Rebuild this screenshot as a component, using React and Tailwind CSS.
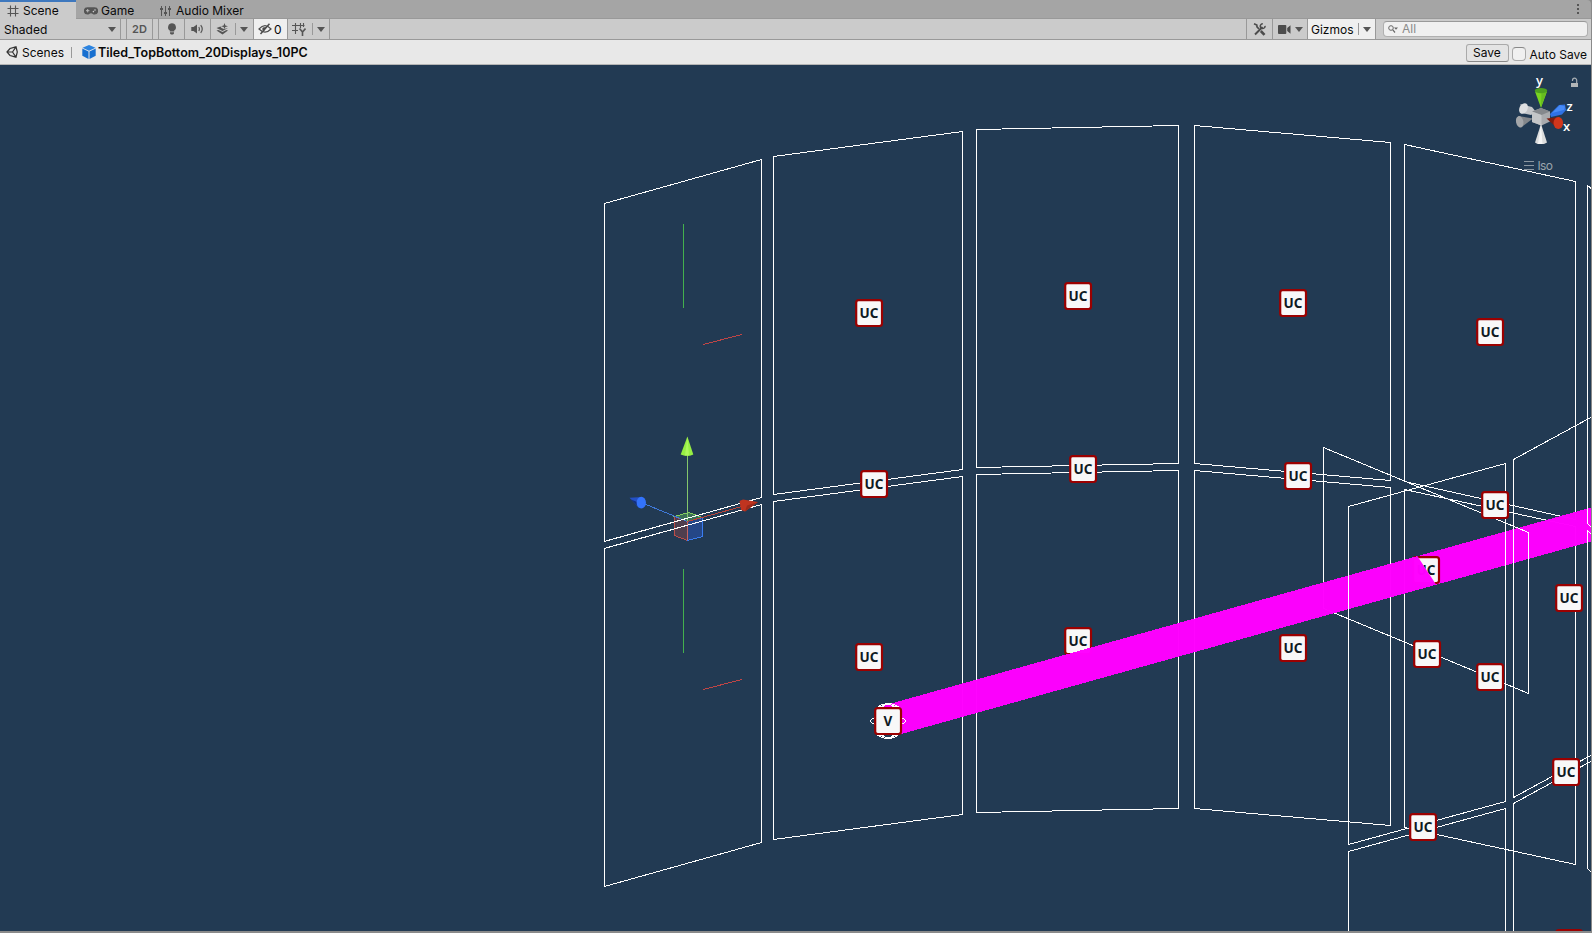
import React from "react";

const LINE = "#ffffff";

const backPanels = [
  "604.5,203.5 761.5,159.5 761.5,497.5 604.5,541.5",
  "604.5,548.5 761.5,504.5 761.5,842.5 604.5,886.5",
  "773.5,156.5 962.5,131.5 962.5,469.5 773.5,494.5",
  "773.5,501.5 962.5,476.5 962.5,814.5 773.5,839.5",
  "976.5,129.5 1178.5,125.5 1178.5,463.5 976.5,467.5",
  "976.5,474.5 1178.5,470.5 1178.5,808.5 976.5,812.5",
  "1194.5,125.5 1390.5,142.5 1390.5,480.5 1194.5,463.5",
  "1194.5,470.5 1390.5,487.5 1390.5,825.5 1194.5,808.5",
  "1404.5,144.5 1575.5,181.5 1575.5,519.5 1404.5,481.5",
  "1404.5,489.5 1575.5,526.5 1575.5,864.5 1404.5,827.5",
];

const frontPanels = [
  "1587.5,185.5 1640.5,227.5 1640.5,571.5 1587.5,523.5",
  "1587.5,530.5 1640.5,578.5 1640.5,920.5 1587.5,868.5",
  "1348.5,506.5 1505.5,463.5 1505.5,801.5 1348.5,844.5",
  "1348.5,851.5 1505.5,808.5 1505.5,1100.5 1348.5,1100.5",
  "1513.5,459.5 1660.5,379.5 1660.5,717.5 1513.5,797.5",
  "1513.5,803.5 1660.5,723.5 1660.5,1100.5 1513.5,1100.5",
];

const backMarkers = [
  [869, 313], [1078, 296], [1293, 303], [1490, 332],
  [874, 484], [1083, 469], [1298, 476],
  [869, 657], [1078, 641], [1293, 648], [1427, 654],
  [1569, 598], [1426, 570],
];

const frontMarkers = [[1495, 505], [1490, 677], [1566, 772], [1423, 827]];

function Marker({ x, y, label = "UC" }) {
  return (
    <g>
      <rect x={x - 12.8} y={y - 12.8} width="25.8" height="25.8" rx="2.500" fill="#f8f8f8" stroke="#9b0000" strokeWidth="2.200" />
      {label && (
        <text x={x} y={y + 5} textAnchor="middle" fill="#0f1a22" className="font-['Noto_Sans',sans-serif] text-[13.5px] font-bold">
          {label}
        </text>
      )}
    </g>
  );
}

function Beam() {
  return <polygon points="884,705.5 900,701 1591,507.5 1591,541.5 894,736" fill="#ff00ff" fillOpacity="0.985" shapeRendering="crispEdges" />;
}

function MoveGizmo() {
  return (
    <g>
      <g shapeRendering="crispEdges" fill="none">
        <path d="M674.5 516.5 688.5 512.5 702.5 517.5 687.5 521.5Z" fill="#63c05a" fillOpacity=".4" stroke="#82cc5c" />
        <path d="M674.5 516.5 687.5 521.5V540.5L674.5 535.5Z" fill="#c74a45" fillOpacity=".28" stroke="#bd4d48" />
        <path d="M687.5 521.5 702.5 517.5V536.5L687.5 540.5Z" fill="#2a5cd8" fillOpacity=".4" stroke="#3a7cf0" />
        <path d="M687.5 521V540" stroke="#c86460" />
        <path d="M687.5 455V521" stroke="#84c66c" />
        <path d="M643.5 503.5 687.5 521.5" stroke="#3f78d8" />
        <path d="M687.5 521.5 745.5 505.5" stroke="#bb4438" />
        <path d="M604 541.5 761.5 497.5M604 548.5 761.5 504.5" stroke="#fff" />
      </g>
      <path d="M687.4 436.500 693.300 454.5 690 455.8H684.500L680.700 454.500Z" fill="#96ee43" />
      <path d="M687.4 437 689 455.500H685Z" fill="#adf75b" />
      <path d="M629.500 497.800 642 497 639 508Z" fill="#2450c4" />
      <path d="M631 499.500 637 502 638 506.500Z" fill="#142f78" />
      <ellipse cx="641.3" cy="502.700" rx="4.700" ry="5.900" fill="#3373fb" />
      <path d="M758 502 743 499.500 739.500 501 741 510 745 511.500Z" fill="#c03420" />
      <path d="M758 502 747 505.500 745 511.500Z" fill="#9c2a1a" />
    </g>
  );
}

function OrientationGizmo() {
  return (
    <g>
      <path d="M1520.500 104 1532 107 1536 112 1531 115 1521 113Z" fill="#c3c5c8" />
      <ellipse cx="1523.500" cy="108.500" rx="4" ry="5.600" transform="rotate(28 1523.500 108.500)" fill="#dfe0e2" />
      <path d="M1518 116 1533 118.500 1521 127.500Z" fill="#84878b" />
      <ellipse cx="1519.700" cy="121.800" rx="3.700" ry="5.800" transform="rotate(-12 1519.700 121.800)" fill="#a4a6a9" />
      <path d="M1550 114 1559 105 1565 104.500 1566 110 1562 114.500 1551 117Z" fill="#2f72e6" />
      <path d="M1552 113 1560 105 1565 106.500 1564 110Z" fill="#478bf8" />
      <path d="M1532 111.500 1541 108 1550 111.500V121.500L1541.500 125.500 1532 122Z" fill="#a9abae" />
      <path d="M1532 111.500 1541 108 1550 111.500 1541.500 115Z" fill="#85888c" />
      <path d="M1532 111.500 1541.500 115V125.500L1532 122Z" fill="#c4c6c8" />
      <path d="M1535 91.500 1541 108 1547 91.500Z" fill="#78d421" />
      <path d="M1541.500 91.500 1541 107 1546.500 92Z" fill="#66bd1f" />
      <ellipse cx="1541" cy="90.700" rx="6.200" ry="2.600" fill="#4da01f" />
      <path d="M1541 124 1547 142.500 1544 144H1537.500L1535 142.500Z" fill="#dcdddd" />
      <path d="M1541 124 1542.500 144H1538Z" fill="#f5f5f5" />
      <path d="M1546.500 118.500 1560 117 1557 128Z" fill="#7e1c10" />
      <ellipse cx="1558.300" cy="123" rx="4.800" ry="6" fill="#d0361c" />
      <g fill="#fff" className="font-['Open_Sans',sans-serif] text-[13px] font-semibold">
        <text x="1536" y="85">y</text>
        <text x="1566.500" y="111">z</text>
        <text x="1563" y="130.500">x</text>
      </g>
      <g fill="none" stroke="#a7adb3">
        <path d="M1572.500 81V80.300A2.100 2.100 0 0 1 1576.700 80.300V83" strokeWidth="1.200" />
        <path d="M1571 83H1578V87H1571Z" fill="#b2b5b7" stroke="none" />
        <path d="M1524 161.500H1534M1524 165.500H1534M1524 169.500H1534" stroke="#8c97a1" />
      </g>
      <text x="1537.500" y="170" textLength="15.500" fill="#9ba4ac" className="font-[Inter,sans-serif] text-[12px]">Iso</text>
    </g>
  );
}

function SceneCanvas() {
  return (
    <svg viewBox="0 65 1591 866" className="block h-[866px] w-[1591px] bg-[#223a53]">
      <defs>
        <clipPath id="cut">
          <path d="M1412 555.500H1417L1436 584.500H1441V555.500Z" />
        </clipPath>
      </defs>
      <g fill="none" stroke={LINE} shapeRendering="crispEdges">
        {backPanels.map((p) => <polygon key={p} points={p} />)}
        <path d="M1323.500 447.500V608.500L1528.500 693.500" />
        <path d="M683.500 224V308M683.500 569V653" stroke="#43b04d" />
        <path d="M703 344.500 742 334.500M703 689.500 742 679.500" stroke="#c04545" />
      </g>
      {backMarkers.map(([x, y]) => <Marker key={`${x}-${y}`} x={x} y={y} />)}
      <Beam />
      <g fill="none" stroke={LINE} shapeRendering="crispEdges">
        {frontPanels.map((p) => <polygon key={p} points={p} />)}
        <path d="M1323.500 447.500 1528.500 532.500V693.500" />
        <ellipse cx="888" cy="721" rx="17.500" ry="5" />
        <circle cx="888" cy="721" r="17.500" strokeDasharray="22 33" strokeDashoffset="-16.500" />
        <ellipse cx="888" cy="721" rx="10" ry="17" />
        <path d="M879 707 888 704 897 707M879 735 888 738 897 735" />
      </g>
      {frontMarkers.map(([x, y]) => <Marker key={`${x}-${y}`} x={x} y={y} />)}
      <Marker x={1569} y={943} label="" />
      <g clipPath="url(#cut)"><Marker x={1426} y={570} /></g>
      <Marker x={888} y={721} label="V" />
      <MoveGizmo />
      <OrientationGizmo />
    </svg>
  );
}

function Caret({ className = "" }) {
  return (
    <svg viewBox="0 0 8 5" className={`h-[5px] w-2 shrink-0 fill-[#555] ${className}`}>
      <path d="M0 0H8L4 5Z" />
    </svg>
  );
}

const GridIcon = () => (
  <svg viewBox="0 0 12 12" className="h-3 w-3 shrink-0" fill="none" stroke="#555" strokeWidth="1.100">
    <path d="M3.500 .5V11.500M8.500 .5V11.500M.5 3.500H11.500M.5 8.500H11.500" />
  </svg>
);

const GamepadIcon = () => (
  <svg viewBox="0 0 14 8" className="h-2 w-3.5 shrink-0">
    <path d="M3.500 .3H10.500A3.600 3.600 0 0 1 10.500 7.600C9 7.600 8.500 6.200 7 6.200S5 7.600 3.500 7.600A3.600 3.600 0 0 1 3.500 .3Z" fill="#555" />
    <path d="M2 3.700H5.400M3.700 2V5.400" stroke="#bbb" />
    <circle cx="9.400" cy="4.600" r=".8" fill="#ccc" />
    <circle cx="11" cy="3" r=".8" fill="#ccc" />
  </svg>
);

const MixerIcon = () => (
  <svg viewBox="0 0 12 12" className="h-3 w-3 shrink-0" fill="none" stroke="#555">
    <path d="M1.500 1V11M5.500 1V11M9.500 1V11" strokeWidth="1" />
    <path d="M0 4H3M4 8H7M8 4H11" strokeWidth="2" />
  </svg>
);

const BulbIcon = () => (
  <svg viewBox="0 0 10 12" className="h-3 w-2.5" fill="#555">
    <path d="M5 .3A4 4 0 0 1 7.200 7.600V8.500H2.800V7.600A4 4 0 0 1 5 .3ZM3 9.200H7V10.400L6 11.600H4L3 10.400Z" />
  </svg>
);

const SpeakerIcon = () => (
  <svg viewBox="0 0 13 10" className="h-2.5 w-[13px]" fill="none" stroke="#555">
    <path d="M.3 3H2.500L6 .5V9.500L2.500 7H.3Z" fill="#555" stroke="none" />
    <path d="M7.800 3Q9 5 7.800 7M9.700 1.200Q12.800 5 9.700 8.800" strokeWidth="1.200" />
  </svg>
);

const EffectsIcon = () => (
  <svg viewBox="0 0 13 12" className="h-3 w-[13px] shrink-0" fill="#555">
    <path d="M.5 5 4.500 3.500 5.500 5 8 6 12 5 6.500 8ZM.5 7.500 2.500 7 6.500 9 10.500 7 12 7.500 6.500 11.500Z" />
    <path d="M8.500 0 9.400 2.400 12 3.200 9.400 4 8.500 6 7.600 4 5 3.200 7.600 2.400Z" />
  </svg>
);

const HiddenIcon = () => (
  <svg viewBox="0 0 14 12" className="h-3 w-3.5 shrink-0" fill="none" stroke="#4c4c4c" strokeWidth="1.200">
    <path d="M1 6Q7-.8 13 6Q7 12.200 1 6Z" />
    <path d="M4.800 4.500A2.500 2.500 0 0 0 6 8.300L8.300 4Z" fill="#4c4c4c" stroke="none" />
    <path d="M2.500 11 11.500 .8" strokeWidth="1.500" />
  </svg>
);

const SnapGridIcon = () => (
  <svg viewBox="0 0 14 13" className="h-[13px] w-3.5 shrink-0" fill="none" stroke="#555">
    <path d="M3.500 0V11M8.500 0V5M0 2.500H12.500M0 7.500H6M11.500 0V4" strokeWidth="1.100" />
    <path d="M7.500 5.500 10.500 9 13.500 5.500M10.500 9V13" strokeWidth="1.600" />
  </svg>
);

const ToolsIcon = () => (
  <svg viewBox="0 0 13 13" className="h-[13px] w-[13px]" fill="none" stroke="#4c4c4c">
    <path d="M2 11.500 9.500 4" strokeWidth="1.900" />
    <path d="M12 2.800A2.400 2.400 0 1 1 9.800 .8" strokeWidth="1.500" />
    <path d="M1 .8 3.800 2 4 3.800 6 6" strokeWidth="1.700" />
    <path d="M7.800 8 11.500 11.800" strokeWidth="2.600" />
  </svg>
);

const CameraIcon = () => (
  <svg viewBox="0 0 13 9" className="h-[9px] w-[13px] shrink-0" fill="#4c4c4c">
    <path d="M0 .8Q0 0 1 0H7.500Q8.300 0 8.300 .8V8.200Q8.300 9 7.500 9H1Q0 9 0 8.200ZM9.200 3 12.500 .3V8.700L9.200 6Z" />
  </svg>
);

const UnityIcon = () => (
  <svg viewBox="0 0 12 12" className="h-3 w-3 shrink-0" fill="none" stroke="#333" strokeWidth="1.200">
    <path d="M1 6 4 2.500 10 .8 11.300 6 10 11.200 4 9.500ZM1 6H6.500L10 .8M6.500 6 10 11.200" />
  </svg>
);

const PrefabIcon = () => (
  <svg viewBox="0 0 14 14" className="h-3.5 w-3.5 shrink-0">
    <path d="M7 0 13.500 2.800 7 5.800 .5 2.800Z" fill="#2b83e0" />
    <path d="M.3 3.600 6.500 6.400V14L.3 10.800Z" fill="#176fd0" />
    <path d="M13.700 3.600 7.500 6.400V14L13.700 10.800Z" fill="#176fd0" />
  </svg>
);

function TabBar() {
  return (
    <div className="flex h-[19px] rounded-tr border-b border-[#999] bg-[#a5a5a5]">
      <div className="-mb-px flex w-[76px] items-center gap-1 border-t-2 border-[#3e78be] bg-[#cbcbcb] pl-[7px]">
        <GridIcon />
        <span>Scene</span>
      </div>
      <div className="flex w-[76px] items-center gap-[3px] pl-2 pt-[3px]">
        <GamepadIcon />
        <span>Game</span>
      </div>
      <div className="flex items-center gap-1 pl-2 pt-[3px]">
        <MixerIcon />
        <span>Audio Mixer</span>
      </div>
      <div className="ml-auto flex w-[27px] flex-col items-center justify-center gap-0.5">
        <i className="size-0.5 bg-[#555]" />
        <i className="size-0.5 bg-[#555]" />
        <i className="size-0.5 bg-[#555]" />
      </div>
    </div>
  );
}

const cell = "flex shrink-0 items-center border-r border-[#999]";

function Toolbar() {
  return (
    <div className="flex h-[21px] border-b border-[#999] bg-[#cbcbcb]">
      <div className={`${cell} w-[121px] justify-between pl-1 pr-1`}>
        <span className="pt-px">Shaded</span>
        <Caret />
      </div>
      <div className={`${cell} w-[6px]`} />
      <div className={`${cell} w-[26px] justify-center text-[11px] font-semibold text-[#555]`}>2D</div>
      <div className={`${cell} w-[6px]`} />
      <div className={`${cell} w-[26px] justify-center`}><BulbIcon /></div>
      <div className={`${cell} w-[26px] justify-center`}><SpeakerIcon /></div>
      <div className={`${cell} w-[43px] pl-[5px]`}>
        <EffectsIcon />
        <i className="ml-1.5 h-3 w-px bg-[#999]" />
        <Caret className="ml-1" />
      </div>
      <div className={`${cell} w-[34px] gap-0.5 bg-[#efefef] pl-1`}>
        <HiddenIcon />
        <span className="pt-px">0</span>
      </div>
      <div className={`${cell} w-[42px] pl-1`}>
        <SnapGridIcon />
        <i className="ml-1.5 h-3 w-px bg-[#999]" />
        <Caret className="ml-1" />
      </div>
      <div className="ml-auto flex">
        <div className={`${cell} w-[27px] justify-center border-l pr-px`}><ToolsIcon /></div>
        <div className={`${cell} w-[35px] pl-[5px]`}>
          <CameraIcon />
          <Caret className="ml-1" />
        </div>
        <div className={`${cell} w-[68px] bg-[#efefef] pl-[3px]`}>
          <span className="w-[42px] pt-px">Gizmos</span>
          <i className="ml-[5px] h-3 w-px bg-[#999]" />
          <Caret className="ml-1" />
        </div>
        <div className="ml-[7px] mr-[3px] mt-0.5 flex h-4 w-[205px] items-center rounded border border-[#b0b0b0] border-t-[#999] bg-[#f0f0f0] pl-1">
          <svg viewBox="0 0 11 8" className="h-2 w-[11px]" fill="none" stroke="#666">
            <circle cx="3" cy="3" r="2.300" />
            <path d="M4.800 4.800 7 7.500" strokeWidth="1.200" />
            <path d="M6 2.500H10L8 4.700Z" fill="#666" stroke="none" />
          </svg>
          <span className="ml-[3px] text-[#8a8a8a]">All</span>
        </div>
      </div>
    </div>
  );
}

function Breadcrumbs() {
  return (
    <div className="flex h-[25px] items-center border-b border-[#b5b5b5] bg-[#e8e8e8] pl-1.5">
      <UnityIcon />
      <span className="ml-1 w-[42px] pt-0.5">Scenes</span>
      <i className="ml-[7px] h-[11px] w-px bg-[#999]" />
      <span className="ml-[10px]"><PrefabIcon /></span>
      <span className="ml-[2px] pt-0.5 text-[12.5px] font-semibold">Tiled_TopBottom_20Displays_10PC</span>
      <div className="ml-auto mt-px flex h-[18px] w-[43px] items-center justify-center rounded-[3px] border border-[#aaa] border-b-[#888] bg-[#e4e4e4] pr-0.5 pt-px">Save</div>
      <div className="ml-[3px] mt-[3px] size-3.5 rounded-sm border border-[#aaa] border-t-[#888] bg-[#f0f0f0]" />
      <span className="ml-[3px] mr-1 mt-[5px]">Auto Save</span>
    </div>
  );
}

export default function App() {
  return (
    <div className="h-[933px] w-[1592px] overflow-hidden bg-[#8a8a8a] font-[Inter,sans-serif] text-[12px] leading-4 text-[#090909]">
      <div className="w-[1591px]">
        <TabBar />
        <Toolbar />
        <Breadcrumbs />
        <SceneCanvas />
      </div>
    </div>
  );
}
